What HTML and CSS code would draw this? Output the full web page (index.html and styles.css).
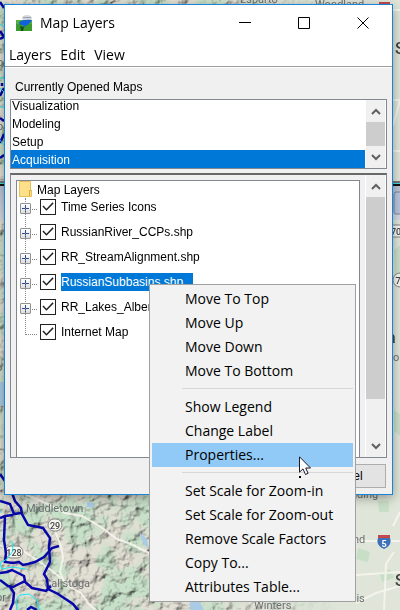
FILE: index.html
```html
<!DOCTYPE html>
<html lang="en">
<head>
<meta charset="utf-8">
<title>Map Layers</title>
<link rel="stylesheet" href="styles.css">
</head>
<body>
<svg class="terrain" viewBox="0 0 400 610" preserveAspectRatio="xMinYMin slice" aria-hidden="true">
  <defs>
    <filter id="relief" x="0" y="0" width="100%" height="100%">
      <feTurbulence type="fractalNoise" baseFrequency="0.08" numOctaves="5" seed="8" result="n"/>
      <feDiffuseLighting in="n" surfaceScale="8" diffuseConstant="1.2" lighting-color="#ffffff">
        <feDistantLight azimuth="225" elevation="55"/>
      </feDiffuseLighting>
    </filter>
    <filter id="tint" x="0" y="0" width="100%" height="100%">
      <feTurbulence type="fractalNoise" baseFrequency="0.03" numOctaves="4" seed="21"/>
      <feColorMatrix values="0 0 0 0 0.52  0 0 0 0 0.75  0 0 0 0 0.56  6 0 0 0 -2.5"/>
    </filter>
    <linearGradient id="plain" x1="0" x2="1" y1="0" y2="0">
      <stop offset="0.5" stop-color="#dfe5d9" stop-opacity="0"/>
      <stop offset="0.85" stop-color="#dfe5d9"/>
    </linearGradient>
    <linearGradient id="bar" x1="0" x2="0" y1="0" y2="1">
      <stop offset="0" stop-color="#b5c1d6"/>
      <stop offset="1" stop-color="#d5dae2"/>
    </linearGradient>
  </defs>
  <rect width="400" height="610" fill="#e2dfd4"/>
  <rect width="400" height="610" filter="url(#tint)" opacity="0.75"/>
  <rect class="shade" width="400" height="610" filter="url(#relief)"/>
  <rect width="400" height="610" fill="url(#plain)"/>
  <g fill="#bfdcbf" opacity="0.7">
    <path d="M378 501h11v11h-10zM358 548l12 4-2 10-12-3zM380 574l10-5 4 9-12 4zM394 250l6-5v30l-5 3zM394 410l6 4v22l-6-5z"/>
  </g>
  <g fill="#a9cbe5">
    <path d="M87 502l7 1-1 5-6-1zM139 532l8 7 2 10-6-6zM190 602l9-2 5 10h-14zM0 382h4v24H0z"/>
  </g>
  <g class="road">
    <path d="M22 493l10 4 18 8 15 8 17 3 19 11 16 12 14 5 20 10"/>
    <path d="M55 531l6 15 2 12-3 14 5 12 16 9 8 11 16 14"/>
    <path d="M0 546l22 4 15 10 14 10 16 13"/>
    <path d="M355 541h45M356 603l20-10 24-7M394 552l-8 12-2 46M393 526l7-14M356 575l44-3M393 10h7M393 100h7M393 151h7M393 126l7-26"/>
  </g>
  <g class="place">
    <text x="240" y="3">Esparto</text>
    <text x="315" y="8">Woodland</text>
    <text x="26" y="512">Middletown</text>
    <text x="44" y="587">Calistoga</text>
    <text x="-4" y="601">or</text>
    <text x="351" y="498">nding</text>
    <text x="353" y="543">nd</text>
    <text x="338" y="602">Davis</text>
    <text x="254" y="609">Winters</text>
    <text x="393" y="361">or</text>
    <text x="-3" y="66">o</text>
    <text x="-3" y="130">o</text>
    <text x="-4" y="371">o</text>
  </g>
  <g class="city">
    <text x="395" y="54">S</text>
    <text x="395" y="586">S</text>
    <text x="387" y="343">a C</text>
  </g>
  <g class="badge">
    <rect x="48" y="519" width="14" height="12" rx="6"/><text x="55" y="529">29</text>
    <rect x="5" y="546" width="18" height="12" rx="6"/><text x="14" y="556">128</text>
    <circle cx="400" cy="280" r="7"/><text x="398" y="284">7</text>
    <rect x="388" y="225" width="16" height="12" rx="2"/><text x="396" y="235">70</text>
  </g>
  <path d="M378 535h12v3h-12z" fill="#c4484c"/>
  <path d="M378 538h12q3 7-6 11-9-4-6-11z" fill="#3d72b8"/>
  <text class="shield" x="384" y="547">5</text>
  <path d="M379 2h11v2h-11z" fill="#c4484c"/>
  <g class="basin">
    <path d="M0 474l5 7 3 4 4 8 3 8 6 7 1 6 6 11 15 3 7 10-1 9 1 15-6 12 3 5 1 10 10 5 15 10 9 11 5 4"/>
    <path d="M0 501l10 3 4 10 7-1M0 518l5-2 8-1M5 516l-1 24 2 13-1 9 8 1 6-1 4 3 5-1 7-2 9-5 8-9 7-2"/>
    <path d="M0 573l7-1 5-2 12 6 1 5-6 3-6 3-5-1-8-6M24 581l8 7 14 3 5-5M10 587l4 6-1 10-3 7M27 610l4-3 6 3"/>
    <path d="M0 31l4 6M0 39l4-2M0 118l4 3M2 83v3M0 96l4-8M0 143l4-9M0 158l4-3M0 2l4 6"/>
  </g>
  <g class="stream">
    <path d="M12 541l1 10-6 8-7 4 2 6 10-2 14 2M17 610l-1-10 4-5 9-1 8 6 2 10M0 24l4 3M0 78h4M0 107h4M0 140l4 5M0 512h2M0 88l4 4"/>
  </g>
  <g>
    <rect y="181" width="400" height="2" fill="#777"/>
    <rect y="183" width="400" height="1" fill="#37dbe4"/>
    <rect y="184" width="400" height="2" fill="#111"/>
    <rect y="186" width="400" height="34" fill="url(#bar)"/>
    <rect x="394" y="192" width="20" height="22" rx="2" fill="#b6c5df" stroke="#7c8796"/>
  </g>
</svg>

<main class="window">
  <header class="titlebar">
    <svg class="app-icon" viewBox="0 0 16 16" aria-hidden="true">
      <rect y="5" width="16" height="11" fill="#3c9a2e"/>
      <path d="M0 5h16v4H0z" fill="#57ae3b"/>
      <ellipse cx="11" cy="3" rx="5" ry="3" fill="#d4d8dd"/>
      <path d="M7 2h8v1H7z" fill="#9da3ab"/>
      <path d="M3 7q5-3 13-2l-2 3q-3 3-5 3l-1 2H7l1-3q-5 1-5-3z" fill="#0f62d8"/>
      <path d="M4 11l4 1-1 4H5z" fill="#16501b"/>
    </svg>
    <h1>Map Layers</h1>
    <div class="controls">
      <button type="button" aria-label="Minimize"><svg viewBox="0 0 12 12"><path d="M0 5.500h12"/></svg></button>
      <button type="button" aria-label="Maximize"><svg viewBox="0 0 12 12"><path d="M.5.5h11v11H.5z"/></svg></button>
      <button type="button" aria-label="Close"><svg viewBox="0 0 12 12"><path d="M.5.5l11 11M11.500.5l-11 11"/></svg></button>
    </div>
  </header>
  <nav class="menubar">
    <button type="button">Layers</button>
    <button type="button">Edit</button>
    <button type="button">View</button>
  </nav>
  <section class="content">
    <h2 id="maps-label">Currently Opened Maps</h2>
    <div class="maps">
      <ul role="listbox" aria-labelledby="maps-label">
        <li role="option">Visualization</li>
        <li role="option">Modeling</li>
        <li role="option">Setup</li>
        <li role="option" aria-selected="true">Acquisition</li>
      </ul>
      <div class="scrollbar">
        <button type="button" aria-label="Scroll up"><svg viewBox="0 0 10 7"><path d="M1 6l4-4 4 4"/></svg></button>
        <span class="thumb"></span>
        <button type="button" aria-label="Scroll down"><svg viewBox="0 0 10 7"><path d="M1 1l4 4 4-4"/></svg></button>
      </div>
    </div>
    <div class="layers">
      <div class="tree">
        <div class="root">
          <svg class="folder" viewBox="0 0 13 16" aria-hidden="true">
            <path d="M.5.5h11v9h1v6H.5z" fill="#ffe08a" stroke="#e8c05a"/>
            <path d="M10.500 15v-5.500h2" fill="none" stroke="#d9a93c"/>
          </svg>
          <span>Map Layers</span>
        </div>
        <ul>
          <li><button type="button" class="expand" aria-label="Expand"></button><input type="checkbox" id="l1" checked><label for="l1">Time Series Icons</label></li>
          <li><button type="button" class="expand" aria-label="Expand"></button><input type="checkbox" id="l2" checked><label for="l2">RussianRiver_CCPs.shp</label></li>
          <li><button type="button" class="expand" aria-label="Expand"></button><input type="checkbox" id="l3" checked><label for="l3">RR_StreamAlignment.shp</label></li>
          <li class="selected"><button type="button" class="expand" aria-label="Expand"></button><input type="checkbox" id="l4" checked><label for="l4">RussianSubbasins.shp</label></li>
          <li><button type="button" class="expand" aria-label="Expand"></button><input type="checkbox" id="l5" checked><label for="l5">RR_Lakes_Albers.shp</label></li>
          <li><span class="leaf"></span><input type="checkbox" id="l6" checked><label for="l6">Internet Map</label></li>
        </ul>
      </div>
      <div class="scrollbar tall">
        <button type="button" aria-label="Scroll up"><svg viewBox="0 0 10 7"><path d="M1 6l4-4 4 4"/></svg></button>
        <span class="thumb"></span>
        <button type="button" aria-label="Scroll down"><svg viewBox="0 0 10 7"><path d="M1 1l4 4 4-4"/></svg></button>
      </div>
    </div>
    <footer><button type="button" class="cancel">Cancel</button></footer>
  </section>
</main>

<div class="popup" role="menu">
  <button type="button" role="menuitem">Move To Top</button>
  <button type="button" role="menuitem">Move Up</button>
  <button type="button" role="menuitem">Move Down</button>
  <button type="button" role="menuitem">Move To Bottom</button>
  <hr>
  <button type="button" role="menuitem">Show Legend</button>
  <button type="button" role="menuitem">Change Label</button>
  <button type="button" role="menuitem" class="active">Properties...</button>
  <hr>
  <button type="button" role="menuitem">Set Scale for Zoom-in</button>
  <button type="button" role="menuitem">Set Scale for Zoom-out</button>
  <button type="button" role="menuitem">Remove Scale Factors</button>
  <button type="button" role="menuitem">Copy To...</button>
  <button type="button" role="menuitem">Attributes Table...</button>
</div>
<svg class="pointer" viewBox="0 0 13 22" aria-hidden="true">
  <path d="M.5.8v15.400l3.500-3.300 2.500 5.600 2.600-1.200-2.400-5.300h4.800z" fill="#fff" stroke="#1a1a2a"/>
  <path d="M0 20h2v2H0z" fill="#000"/>
</svg>
</body>
</html>
```

FILE: styles.css
```css
* { box-sizing: border-box; }

body {
  margin: 0;
  min-height: 100vh;
  overflow: hidden;
  display: flow-root;
  background: #dcdbd0;
  color: #000;
  font: 12px/18px "Liberation Sans", Arial, sans-serif;
}

button {
  margin: 0;
  padding: 0;
  border: 0;
  background: none;
  color: inherit;
  font: inherit;
}

ul { list-style: none; margin: 0; padding: 0; }
h1, h2 { margin: 0; font: inherit; }

/* Map behind the window */
.terrain { position: fixed; inset: 0; width: 100%; height: 100%; }
.shade { mix-blend-mode: multiply; opacity: 0.6; }
.road path { fill: none; stroke: #f8f6ee; stroke-width: 2; opacity: 0.85; }
.place text { font: 11px Roboto, sans-serif; fill: #6c6f72; }
.city text { font: 500 16px Roboto, sans-serif; fill: #444; }
.badge rect, .badge circle { fill: #f4f4f0; stroke: #85857f; }
.badge text { font: 500 9px Roboto, sans-serif; fill: #444; text-anchor: middle; }
.shield { font: bold 9px Roboto, sans-serif; fill: #fff; text-anchor: middle; }
.basin path { fill: none; stroke: #0707a8; stroke-width: 2.5; }
.stream path { fill: none; stroke: #1ce9f3; }

/* Window */
.window {
  position: relative;
  margin: 4px 7px 0 4px;
  border: 1px solid #1883d7;
  background: #fff;
  box-shadow: 0 3px 10px rgba(0, 0, 0, 0.35);
}
.titlebar {
  display: flex;
  align-items: center;
  height: 36px;
  padding-left: 11px;
  font: 14px/20px "Open Sans", "Segoe UI", sans-serif;
}
.app-icon { width: 16px; height: 16px; margin-right: 8px; }
.controls { display: flex; margin-left: auto; }
.controls button { display: grid; place-items: center; width: 59px; height: 36px; }
.controls svg { width: 12px; height: 12px; fill: none; stroke: #000; }
.menubar {
  display: flex;
  gap: 9px;
  height: 26px;
  padding: 4px 4px 0;
  border-bottom: 1px solid #a0a0a0;
  font: 14px/20px "Open Sans", "Segoe UI", sans-serif;
}
.menubar button { height: 20px; }

.content {
  margin-top: 1px;
  padding: 10px 5px 6px;
  background: #f0f0f0;
}
.content h2 { padding: 0 5px; margin-bottom: 3px; }

/* Opened maps list */
.maps {
  display: flex;
  height: 70px;
  border: 1px solid #828790;
  background: #fff;
}
.maps ul {
  flex: 1;
  display: flex;
  flex-direction: column;
  justify-content: flex-end;
  overflow: hidden;
}
.maps li { flex: none; height: 18px; padding-left: 1px; line-height: 20px; }
.maps li[aria-selected] { background: #0078d7; color: #fff; }

.scrollbar {
  display: flex;
  flex-direction: column;
  width: 21px;
  border: solid #fff;
  border-width: 0 1px;
  background: #f0f0f0;
}
.scrollbar button { display: grid; place-items: center; height: 22px; }
.scrollbar svg { width: 10px; height: 7px; fill: none; stroke: #606060; stroke-width: 2; }
.thumb { flex: 1; background: #cdcdcd; }

/* Layer tree */
.layers {
  display: flex;
  min-height: 285px;
  margin-top: 4px;
  border: 1px solid #828790;
  border-top: 2px solid #696969;
}
.tree {
  flex: 1;
  margin: 5px 5px 0;
  padding-left: 2px;
  border: 1px solid #828790;
  border-bottom: 0;
  background: #fff;
}
.tall button:last-child { margin-top: 36px; }
.root { display: flex; gap: 5px; height: 17px; }
.folder { width: 13px; height: 16px; }
.tree ul { display: grid; gap: 8px; }
.tree li { position: relative; display: flex; align-items: center; height: 17px; }
.tree li::before {
  content: "";
  position: absolute;
  left: 6px;
  top: 0;
  width: 11px;
  height: 11px;
  border: dotted #888;
  border-width: 0 0 1px 1px;
}
.tree li + li::before { top: -15px; height: 26px; }
.expand, .leaf { flex: none; width: 11px; height: 11px; margin: 3px 9px 0 1px; }
.expand {
  position: relative;
  border: 1px solid #919191;
  border-radius: 1px;
  background:
    linear-gradient(#2b4b99, #2b4b99) center / 7px 1px no-repeat,
    linear-gradient(#2b4b99, #2b4b99) center / 1px 7px no-repeat,
    linear-gradient(#fff, #ddd);
}
.tree input {
  appearance: none;
  flex: none;
  display: grid;
  width: 16px;
  height: 16px;
  margin: 0 5px 0 0;
  border: 1px solid #222;
  background: #fff;
}
.tree input:checked::after {
  content: "";
  background: #222;
  clip-path: polygon(10% 50%, 18% 43%, 39% 66%, 83% 20%, 90% 28%, 39% 80%);
}
.tree label { height: 18px; padding-right: 10px; }
.selected label { background: #0078d7; color: #fff; }

footer { display: flex; justify-content: flex-end; margin-top: 6px; padding-right: 1px; }
.cancel { width: 84px; height: 24px; border: 1px solid #adadad; background: #e3e3e3; }

/* Context menu */
.popup {
  position: absolute;
  left: 149px;
  top: 284px;
  width: 207px;
  padding: 2px;
  border: 1px solid #a0a0a0;
  background: #f2f2f2;
  font: 14px/24px "Open Sans", "Segoe UI", sans-serif;
}
.popup button { display: block; width: 100%; height: 24px; padding-left: 33px; text-align: left; }
.popup .active { background: #91c9f7; }
.popup hr { height: 1px; margin: 5px 0 6px 30px; border: 0; background: #d7d7d7; }
.pointer { position: absolute; left: 299px; top: 456px; width: 13px; height: 22px; }
```
